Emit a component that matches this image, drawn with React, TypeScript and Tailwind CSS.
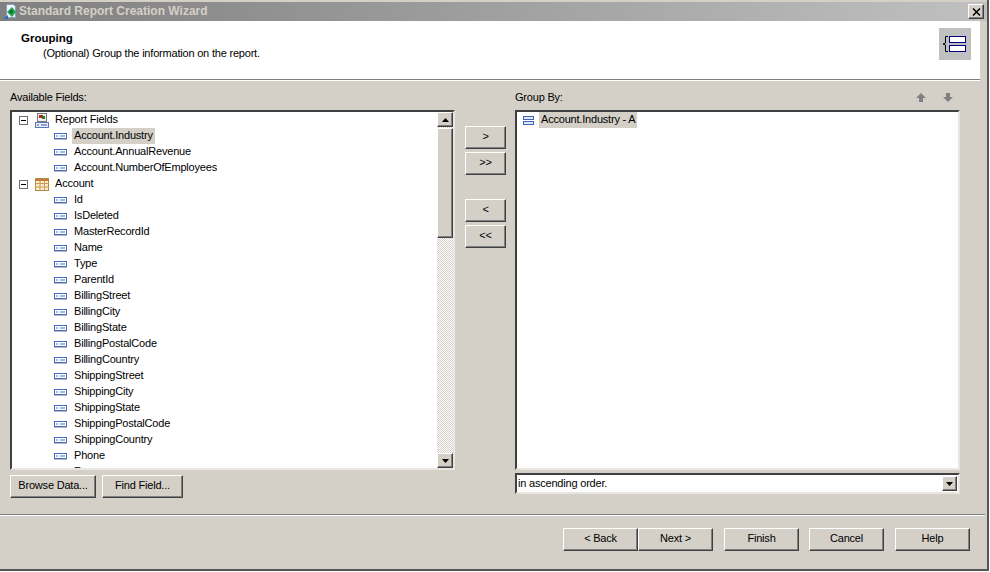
import React from "react";

const bevel = "bg-[#d4d0c8] border-t border-l border-t-white border-l-white border-r border-b border-r-[#404040] border-b-[#404040] shadow-[inset_-1px_-1px_0_#808080]";

function Btn({ label, className }: { label: string; className: string }) {
  return <div className={`${bevel} flex items-center justify-center pb-[2px] text-black ${className}`}>{label}</div>;
}

function Minus() {
  return (
    <svg width="9" height="9" viewBox="0 0 9 9" className="shrink-0">
      <rect x="0.5" y="0.5" width="8" height="8" fill="#fff" stroke="#707070" />
      <path d="M2 4.5h5" stroke="#000" />
    </svg>
  );
}

function FieldIcon() {
  return (
    <svg width="13" height="7" viewBox="0 0 13 7" className="shrink-0">
      <rect x="0.5" y="0.5" width="12" height="5" fill="#fff" stroke="#4a6cb8" />
      <path d="M0 6.5h13" stroke="#b4bcd0" />
      <path d="M2 3h2M6 3h5" stroke="#4a6cb8" />
    </svg>
  );
}

function ReportIcon() {
  return (
    <svg width="14" height="15" viewBox="0 0 14 15" className="shrink-0">
      <rect x="2.5" y="0.5" width="9" height="8" fill="#f0f0f0" stroke="#777" />
      <rect x="4" y="2" width="4" height="3" fill="#c02020" />
      <rect x="7" y="3" width="3" height="3" fill="#208020" />
      <rect x="0.5" y="9.5" width="13" height="5" fill="#e8ecf6" stroke="#5a78b8" />
      <path d="M2 12h2M6 12h6" stroke="#3a5aa8" />
    </svg>
  );
}

function TableIcon() {
  return (
    <svg width="14" height="13" viewBox="0 0 14 13" className="shrink-0">
      <rect x="0.5" y="0.5" width="13" height="12" fill="#f9ecc4" stroke="#b98a50" />
      <path d="M0 1.5h14M0 2.5h14" stroke="#c07a38" />
      <path d="M0.5 5.5h13M0.5 9h13M5 2.5v10M9.5 2.5v10" stroke="#c99a5a" />
    </svg>
  );
}

function Row({ label, selected }: { label: string; selected?: boolean }) {
  return (
    <div className="h-4 flex items-center shrink-0 pl-[42px]">
      <FieldIcon />
      <span className={`ml-[5px] px-[2px] h-4 leading-[14px] ${selected ? "bg-[#d4d0c8]" : ""}`}>{label}</span>
    </div>
  );
}

function Top({ label, icon }: { label: string; icon: React.ReactNode }) {
  return (
    <div className="h-4 flex items-center shrink-0 pl-[7px]">
      <Minus />
      <span className="ml-[7px] w-[20px] flex">{icon}</span>
      <span className="h-4 leading-[14px]">{label}</span>
    </div>
  );
}

function ScrollBtn({ down }: { down?: boolean }) {
  return (
    <div className={`${bevel} h-[15px] shrink-0 flex items-center justify-center`}>
      <svg width="7" height="4" viewBox="0 0 7 4">
        <path d={down ? "M0 0h7L3.5 4z" : "M0 4h7L3.5 0z"} fill="#000" />
      </svg>
    </div>
  );
}

const sunken = "border-t-2 border-l-2 border-t-[#404040] border-l-[#404040] border-r-2 border-b-2 border-r-[#e8e6e0] border-b-[#e8e6e0] bg-white";

const fields = ["Id","IsDeleted","MasterRecordId","Name","Type","ParentId","BillingStreet","BillingCity","BillingState","BillingPostalCode","BillingCountry","ShippingStreet","ShippingCity","ShippingState","ShippingPostalCode","ShippingCountry","Phone","Fax"];

export default function App() {
  return (
    <div className="w-[990px] h-[572px] bg-white overflow-hidden text-[11px] tracking-[-0.2px] text-black font-['Liberation_Sans',Arial,sans-serif]">
      <div className="w-[989px] h-[571px] bg-[#d4d0c8] border-r-2 border-b-2 border-[#555] flex flex-col pt-[2px]">
        {/* title bar */}
        <div className="h-[19px] shrink-0 flex items-center pl-[2px] pr-[3px] bg-gradient-to-r from-[#808080] to-[#c0c0c0]">
          <svg width="15" height="16" viewBox="0 0 15 16" className="shrink-0">
            <path d="M4.5 0.5h7l2 2v11h-9z" fill="#eef3fa" stroke="#8aa0c0" />
            <path d="M1 15l5-4v4z" fill="#2a70c8" />
            <path d="M5 8l5-5 4 5-4 5z" fill="#20a848" />
            <path d="M7 8l3-3 1 3-2 2z" fill="#0a6e3a" />
          </svg>
          <span className="ml-[2px] pb-[2px] font-bold text-[#d4d0c8] text-[12px] tracking-normal leading-none flex-1">Standard Report Creation Wizard</span>
          <div className={`${bevel} w-[16px] h-[15px] flex items-center justify-center`}>
            <svg width="9" height="8" viewBox="0 0 9 8"><path d="M1 0.5l7 7M8 0.5l-7 7" stroke="#000" strokeWidth="1.5" /></svg>
          </div>
        </div>
        {/* header */}
        <div className="h-[58px] shrink-0 mr-[7px] bg-white flex justify-between pl-[21px] pr-[9px] pt-[10px]">
          <div>
            <div className="font-bold text-[11.5px] tracking-normal leading-[15px]">Grouping</div>
            <div className="pl-[22px] leading-[15px]">(Optional) Group the information on the report.</div>
          </div>
          <div className="w-[32px] h-[32px] mt-[-3px]">
            <svg width="32" height="32" viewBox="0 0 32 32">
              <rect width="32" height="32" fill="#c0c0c0" />
              <rect x="10.5" y="8.5" width="16" height="6" fill="#fff" stroke="#000080" />
              <rect x="10.5" y="17.5" width="16" height="6" fill="#fff" stroke="#000080" />
              <path d="M9 8.5H6.5V15L4 16l2.5 1V23.5H9" fill="none" stroke="#000" />
            </svg>
          </div>
        </div>
        <div className="h-[2px] shrink-0 mr-[7px] border-t border-b border-t-[#808080] border-b-white" />
        {/* main */}
        <div className="flex px-[10px] flex-1 min-h-0">
          <div className="w-[445px] flex flex-col">
            <div className="h-[29px] pt-[9px] leading-[15px] shrink-0">Available Fields:</div>
            <div className={`${sunken} h-[360px] flex shrink-0`}>
              <div className="flex-1 min-w-0 overflow-hidden flex flex-col">
                <Top label="Report Fields" icon={<ReportIcon />} />
                <Row label="Account.Industry" selected />
                <Row label="Account.AnnualRevenue" />
                <Row label="Account.NumberOfEmployees" />
                <Top label="Account" icon={<TableIcon />} />
                {fields.map((f) => <Row key={f} label={f} />)}
              </div>
              <div className="w-[16px] shrink-0 flex flex-col bg-[repeating-conic-gradient(#d4d0c8_0_25%,#fff_0_50%)] bg-[length:2px_2px]">
                <ScrollBtn />
                <div className={`${bevel} h-[110px] shrink-0 mt-[1px]`} />
                <div className="flex-1" />
                <ScrollBtn down />
              </div>
            </div>
            <div className="flex gap-[6px] mt-[5px]">
              <Btn label="Browse Data..." className="w-[86px] h-[23px]" />
              <Btn label="Find Field..." className="w-[81px] h-[23px]" />
            </div>
          </div>
          <div className="w-[60px] shrink-0 flex flex-col items-center pt-[45px] pl-[1px]">
            <Btn label=">" className="w-[41px] h-[23px]" />
            <Btn label=">>" className="w-[41px] h-[23px] mt-[3px]" />
            <Btn label="<" className="w-[41px] h-[23px] mt-[24px]" />
            <Btn label="<<" className="w-[41px] h-[23px] mt-[3px]" />
          </div>
          <div className="w-[445px] flex flex-col">
            <div className="h-[29px] pt-[9px] shrink-0 flex justify-between leading-[15px]">
              <span>Group By:</span>
              <div className="flex gap-[15px] pr-[6px] pt-[2px] h-[12px]">
                {[0, 1].map((i) => (
                  <svg key={i} width="12" height="11" viewBox="0 0 12 11">
                    <path d={i === 0 ? "M6 1l5 5H8v4H4V6H1z" : "M4 1h4v4h3l-5 5-5-5h3z"} fill="#808080" />
                  </svg>
                ))}
              </div>
            </div>
            <div className={`${sunken} h-[360px] shrink-0 pl-[6px]`}>
              <div className="h-4 flex items-center">
                <svg width="11" height="9" viewBox="0 0 11 9" className="shrink-0">
                  <rect x="0.5" y="0.5" width="10" height="3" fill="#dfe6f5" stroke="#3f64b8" />
                  <rect x="0.5" y="5.5" width="10" height="3" fill="#dfe6f5" stroke="#3f64b8" />
                </svg>
                <span className="ml-[5px] px-[2px] h-4 leading-[14px] bg-[#d4d0c8]">Account.Industry - A</span>
              </div>
            </div>
            <div className={`${sunken} h-[21px] mt-[3px] flex items-center justify-between`}>
              <span className="pl-[1px] leading-none">in ascending order.</span>
              <div className={`${bevel} w-[15px] h-[15px] flex items-center justify-center mr-[1px]`}>
                <svg width="7" height="4" viewBox="0 0 7 4"><path d="M0 0h7L3.5 4z" fill="#000" /></svg>
              </div>
            </div>
          </div>
        </div>
        <div className="h-[2px] shrink-0 mr-[2px] border-t border-b border-t-[#808080] border-b-white" />
        {/* footer */}
        <div className="h-[53px] shrink-0 flex pl-[563px] pt-[12px]">
          <Btn label="< Back" className="w-[75px] h-[23px]" />
          <Btn label="Next >" className="w-[75px] h-[23px]" />
          <Btn label="Finish" className="w-[75px] h-[23px] ml-[11px]" />
          <Btn label="Cancel" className="w-[75px] h-[23px] ml-[10px]" />
          <Btn label="Help" className="w-[75px] h-[23px] ml-[11px]" />
        </div>
      </div>
    </div>
  );
}
